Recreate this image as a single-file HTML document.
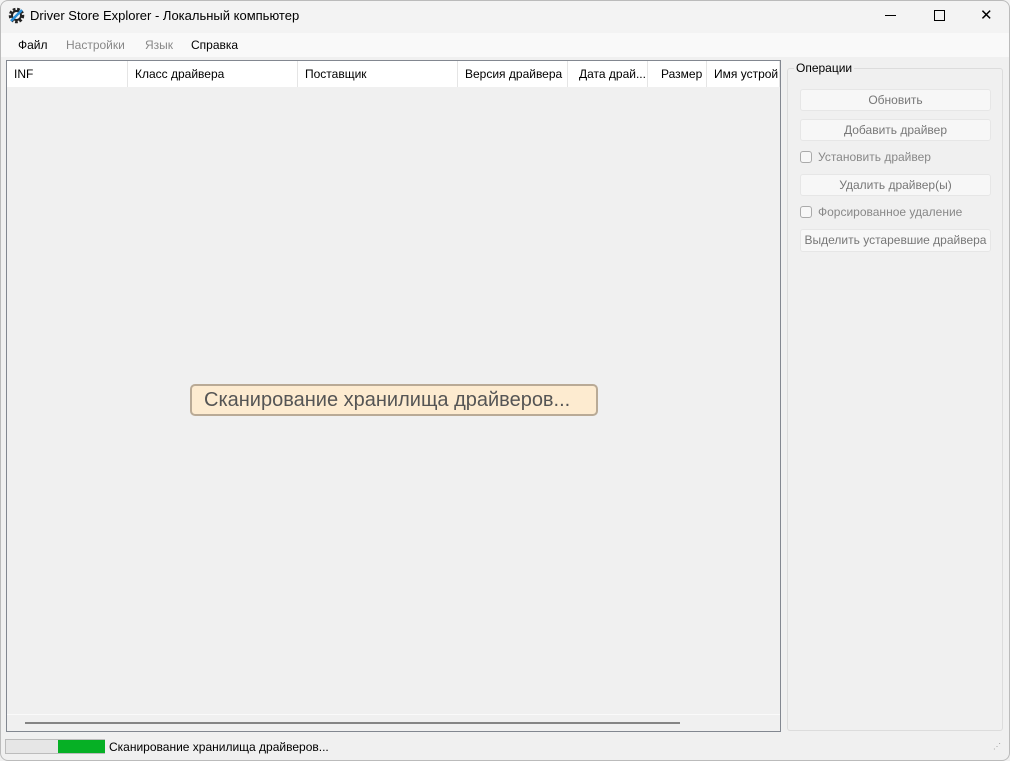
<!DOCTYPE html><html><head><meta charset="utf-8"><style>
*{box-sizing:border-box;margin:0;padding:0}
body{width:1010px;height:761px;background:#f0f0f0;font-family:"Liberation Sans",sans-serif;font-size:12px;color:#000;position:relative;overflow:hidden}
.a{position:absolute}
.title{left:0;top:0;width:1010px;height:33px;background:#f3f3f3}
.menu{left:0;top:33px;width:1010px;height:24px;background:#f9f9f9}
.menu span{position:absolute;top:5px}
.list{left:6px;top:60px;width:775px;height:672px;border:1px solid #828790;background:#f0f0f0}
.hdr{left:0;top:0;width:773px;height:26px;background:#fff}
.hdr span{position:absolute;height:26px;top:0;line-height:26px;border-right:1px solid #e5e5e5;padding-left:7px}
.grp{left:787px;top:68px;width:216px;height:663px;border:1px solid #dcdcdc;border-radius:3px}
.btn{position:absolute;left:800px;width:191px;height:22px;background:#f7f7f7;border:1px solid #e6e6e6;border-radius:3px;color:#777;text-align:center;line-height:20px}
.cb{position:absolute;left:800px;color:#888}
.cb i{display:inline-block;width:12px;height:12px;border:1px solid #aaa;border-radius:3px;vertical-align:-2px;margin-right:6px;background:#f7f7f7}
</style></head><body>
<div class="a title">
<svg class="a" style="left:8px;top:7px" width="17" height="17" viewBox="0 0 17 17"><circle cx="8.5" cy="8.5" r="6" fill="none" stroke="#222" stroke-width="3.5" stroke-dasharray="2.5 1.6"/><circle cx="8.5" cy="8.5" r="4.5" fill="none" stroke="#222" stroke-width="2"/><path d="M3 14 L14 3" stroke="#2a8fd8" stroke-width="2.5"/></svg>
<span class="a" style="left:30px;top:8px;font-size:13px">Driver Store Explorer - Локальный компьютер</span>
<span class="a" style="left:885px;top:15px;width:11px;height:1px;background:#000"></span>
<span class="a" style="left:934px;top:10px;width:11px;height:11px;border:1px solid #000"></span>
<span class="a" style="left:980px;top:6px;font-size:15px">✕</span>
</div>
<div class="a menu"><span style="left:18px">Файл</span><span style="left:66px;color:#888">Настройки</span><span style="left:145px;color:#888">Язык</span><span style="left:191px">Справка</span></div>
<div class="a list"><div class="a hdr">
<span style="left:0;width:121px">INF</span><span style="left:121px;width:170px">Класс драйвера</span><span style="left:291px;width:160px">Поставщик</span><span style="left:451px;width:110px">Версия драйвера</span><span style="left:561px;width:80px;padding-left:11px">Дата драй...</span><span style="left:641px;width:59px;padding-left:13px">Размер</span><span style="left:700px;width:73px;white-space:nowrap;overflow:hidden">Имя устрой</span></div>
<div class="a" style="left:0;top:653px;width:773px;height:1px;background:#fafafa"></div>
<div class="a" style="left:18px;top:661px;width:655px;height:2px;background:#858585"></div>
</div>
<div class="a" style="left:190px;top:384px;width:408px;height:32px;background:#fdebd0;border:2px solid #b9aa96;border-radius:5px;font-size:20px;color:#555;line-height:28px;padding-left:12px">Сканирование хранилища драйверов...</div>
<div class="a grp"></div>
<span class="a" style="left:794px;top:61px;background:#f0f0f0;padding:0 2px">Операции</span>
<div class="btn" style="top:89px">Обновить</div>
<div class="btn" style="top:119px">Добавить драйвер</div>
<div class="cb" style="top:150px"><i></i>Установить драйвер</div>
<div class="btn" style="top:174px">Удалить драйвер(ы)</div>
<div class="cb" style="top:205px"><i></i>Форсированное удаление</div>
<div class="btn" style="top:229px;height:23px">Выделить устаревшие драйвера</div>
<div class="a" style="left:5px;top:739px;width:100px;height:15px;background:#e6e6e6;border:1px solid #bcbcbc"></div>
<div class="a" style="left:58px;top:740px;width:47px;height:13px;background:#06b025"></div>
<span class="a" style="left:109px;top:740px">Сканирование хранилища драйверов...</span>
<span class="a" style="left:993px;top:742px;font-size:8px;color:#999">⋰</span>
<div class="a" style="left:0;top:0;width:1010px;height:761px;border:1px solid #bbb;border-radius:8px;pointer-events:none"></div>
</body></html>
